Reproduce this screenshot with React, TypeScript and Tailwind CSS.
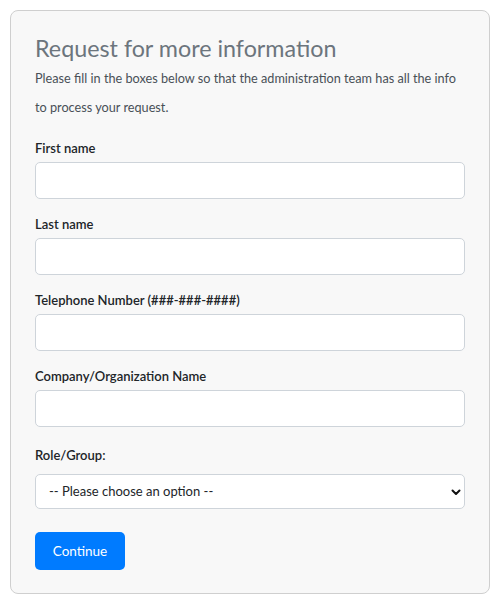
import React from "react";

const font = { fontFamily: '"Segoe UI", Lato, "Noto Sans", sans-serif' };

function Field({ label, hint }: { label: string; hint?: string }) {
  return (
    <div className="mb-[15px]">
      <label className="block h-[20px] mb-[4px] text-[13px] leading-[20px] font-semibold text-[#212529]">
        {label}
        {hint && <span className="font-semibold text-[13px]"> {hint}</span>}
      </label>
      <input
        type="text"
        className="block w-full h-[37px] rounded-[5px] border border-[#ced4da] bg-white px-3 outline-none"
      />
    </div>
  );
}

export default function App() {
  return (
    <div className="p-[10px] bg-white min-h-[604px]" style={font}>
      <div className="w-[480px] rounded-[8px] border border-[#cfcfcf] bg-[#f8f8f8] px-[24px] pt-[23px] pb-[23px]">
        <h1 className="text-[23.3px] leading-[28px] text-[#6c757d] font-normal">
          Request for more information
        </h1>
        <p className="mt-[2px] mb-[16px] text-[12.7px] leading-[29px] text-[#495057]">
          Please fill in the boxes below so that the administration team has all the info to process your request.
        </p>
        <Field label="First name" />
        <Field label="Last name" />
        <Field label="Telephone Number" hint="(###-###-####)" />
        <Field label="Company/Organization Name" />
        <div className="mb-[23px] pt-[3px]">
          <label className="block h-[20px] mb-[9px] text-[13px] leading-[20px] font-semibold text-[#212529]">
            Role/Group:
          </label>
          <div className="relative">
            <select className="block w-full h-[35px] appearance-none rounded-[5px] border border-[#ced4da] bg-white pl-[13px] pr-8 text-[13px] text-[#212529] outline-none">
              <option>-- Please choose an option --</option>
            </select>
            <svg
              className="pointer-events-none absolute right-[3px] top-1/2 -translate-y-1/2"
              width="12"
              height="12"
              viewBox="0 0 12 12"
            >
              <path d="M2.5 4.5 L6 8 L9.5 4.5" fill="none" stroke="#111" strokeWidth="2" strokeLinecap="round" strokeLinejoin="round" />
            </svg>
          </div>
        </div>
        <button className="h-[38px] w-[90px] rounded-[5px] bg-[#007bff] text-[13.5px] text-white">
          Continue
        </button>
      </div>
    </div>
  );
}
